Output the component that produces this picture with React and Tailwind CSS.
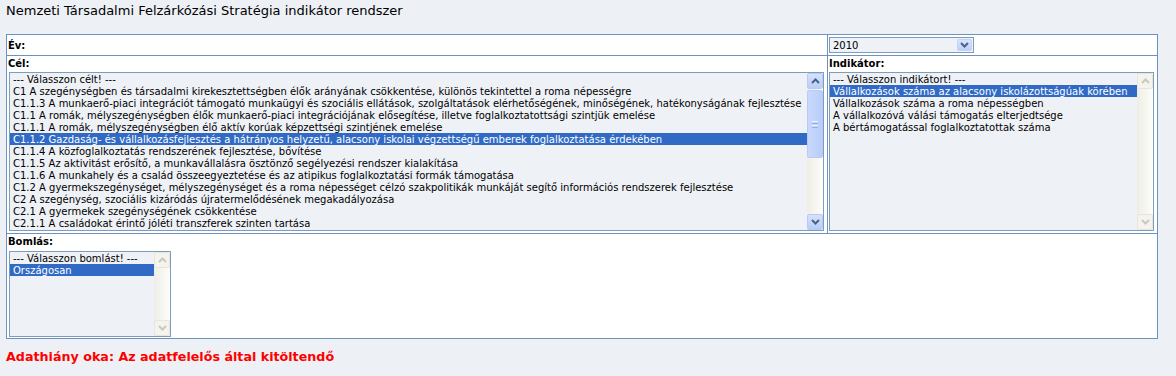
import React from 'react';

const celItems = [
  '--- Válasszon célt! ---',
  'C1 A szegénységben és társadalmi kirekesztettségben élők arányának csökkentése, különös tekintettel a roma népességre',
  'C1.1.3 A munkaerő-piaci integrációt támogató munkaügyi és szociális ellátások, szolgáltatások elérhetőségének, minőségének, hatékonyságának fejlesztése',
  'C1.1 A romák, mélyszegénységben élők munkaerő-piaci integrációjának elősegítése, illetve foglalkoztatottsági szintjük emelése',
  'C1.1.1 A romák, mélyszegénységben élő aktív korúak képzettségi szintjének emelése',
  'C1.1.2 Gazdaság- és vállalkozásfejlesztés a hátrányos helyzetű, alacsony iskolai végzettségű emberek foglalkoztatása érdekében',
  'C1.1.4 A közfoglalkoztatás rendszerének fejlesztése, bővítése',
  'C1.1.5 Az aktivitást erősítő, a munkavállalásra ösztönző segélyezési rendszer kialakítása',
  'C1.1.6 A munkahely és a család összeegyeztetése és az atipikus foglalkoztatási formák támogatása',
  'C1.2 A gyermekszegénységet, mélyszegénységet és a roma népességet célzó szakpolitikák munkáját segítő információs rendszerek fejlesztése',
  'C2 A szegénység, szociális kizáródás újratermelődésének megakadályozása',
  'C2.1 A gyermekek szegénységének csökkentése',
  'C2.1.1 A családokat érintő jóléti transzferek szinten tartása',
];

const indikatorItems = [
  '--- Válasszon indikátort! ---',
  'Vállalkozások száma az alacsony iskolázottságúak körében',
  'Vállalkozások száma a roma népességben',
  'A vállalkozóvá válási támogatás elterjedtsége',
  'A bértámogatással foglalkoztatottak száma',
];

const bomlasItems = ['--- Válasszon bomlást! ---', 'Országosan'];

function Arrow({ up, color }) {
  return (
    <svg width="9" height="6" viewBox="0 0 9 6">
      <polyline
        points={up ? '1,5 4.5,1.5 8,5' : '1,1 4.5,4.5 8,1'}
        fill="none"
        stroke={color}
        strokeWidth="2"
      />
    </svg>
  );
}

function ScrollButton({ up, disabled }) {
  return disabled ? (
    <div className="h-[16px] flex items-center justify-center rounded-[2px] border border-[#e8e6dc] bg-[#f4f3ee]">
      <Arrow up={up} color="#cbc8ba" />
    </div>
  ) : (
    <div className="h-[16px] flex items-center justify-center rounded-[2px] border border-[#b7cbf6] bg-[linear-gradient(to_bottom,#d5e2fd,#b8cdf9)]">
      <Arrow up={up} color="#4d6185" />
    </div>
  );
}

function ScrollBar({ disabled, thumb }) {
  return (
    <div className="w-[16px] flex flex-col bg-[linear-gradient(to_right,#eeede5,#fdfdfa)]">
      <ScrollButton up disabled={disabled} />
      <div className="flex-1">
        {!disabled && (
          <div
            className="mt-[1px] flex flex-col items-center justify-center gap-[1px] rounded-[2px] border border-[#b7cbf6] bg-[linear-gradient(to_right,#cad9fd,#b9cdf9)]"
            style={{ height: thumb }}
          >
            <div className="w-[6px] h-[1px] bg-[#eef4ff]" />
            <div className="w-[6px] h-[1px] bg-[#8fb0f3]" />
            <div className="w-[6px] h-[1px] bg-[#eef4ff]" />
            <div className="w-[6px] h-[1px] bg-[#8fb0f3]" />
          </div>
        )}
      </div>
      <ScrollButton disabled={disabled} />
    </div>
  );
}

function ListBox({ items, selected, className, disabled, thumb }) {
  return (
    <div className={`flex border border-[#7f9db9] bg-[#eef1f6] ${className}`}>
      <div className="flex-1 overflow-hidden">
        {items.map((item, i) => (
          <div
            key={i}
            className={`h-[12px] leading-[13px] pl-[3px] whitespace-nowrap text-[10px] ${
              i === selected ? 'bg-[#316ac5] text-white' : 'text-black'
            }`}
          >
            {item}
          </div>
        ))}
      </div>
      <ScrollBar disabled={disabled} thumb={thumb} />
    </div>
  );
}

export default function App() {
  return (
    <div className="min-h-screen bg-[#edf0f5] pl-[6px] pt-[3px] font-['DejaVu_Sans',Verdana,sans-serif] text-black">
      <h1 className="text-[13px] leading-[16px] font-normal">
        Nemzeti Társadalmi Felzárkózási Stratégia indikátor rendszer
      </h1>

      <div className="mt-[15px] w-[1152px] border border-[#6b93c1] bg-white">
        {/* Év */}
        <div className="flex h-[20px]">
          <div className="w-[821px] border-r border-[#6b93c1] pl-[1px] pt-[1px] flex items-center text-[10px] font-bold">
            Év:
          </div>
          <div className="flex-1 pl-[1px] pt-[2px]">
            <div className="flex h-[16px] w-[145px] border border-[#7f9db9] bg-[#eef1f6]">
              <div className="flex-1 pl-[3px] text-[10px] leading-[15px]">2010</div>
              <div className="m-[1px] w-[15px] flex items-center justify-center rounded-[2px] border border-[#c4d4f8] bg-[linear-gradient(to_bottom,#d9e5fd,#bccffa)]">
                <Arrow color="#4d6185" />
              </div>
            </div>
          </div>
        </div>

        {/* Cél / Indikátor */}
        <div className="flex border-t border-[#6b93c1] h-[178px]">
          <div className="w-[821px] border-r border-[#6b93c1] pl-[1px]">
            <div className="h-[16px] leading-[15px] text-[10px] font-bold">Cél:</div>
            <div className="pl-[1px] pr-[3px]">
              <ListBox items={celItems} selected={5} className="h-[159px]" thumb={68} />
            </div>
          </div>
          <div className="flex-1 pl-[1px]">
            <div className="h-[16px] leading-[15px] text-[10px] font-bold">Indikátor:</div>
            <div className="pr-[3px]">
              <ListBox items={indikatorItems} selected={1} className="h-[159px]" disabled />
            </div>
          </div>
        </div>

        {/* Bomlás */}
        <div className="border-t border-[#6b93c1] h-[105px] pl-[1px]">
          <div className="h-[17px] leading-[15px] text-[10px] font-bold">Bomlás:</div>
          <div className="pl-[1px]">
            <ListBox items={bomlasItems} selected={1} className="w-[162px] h-[86px]" disabled />
          </div>
        </div>
      </div>

      <div className="mt-[10px] text-[12.7px] leading-[16px] font-bold text-[#ff0000]">
        Adathiány oka: Az adatfelelős által kitöltendő
      </div>
    </div>
  );
}
